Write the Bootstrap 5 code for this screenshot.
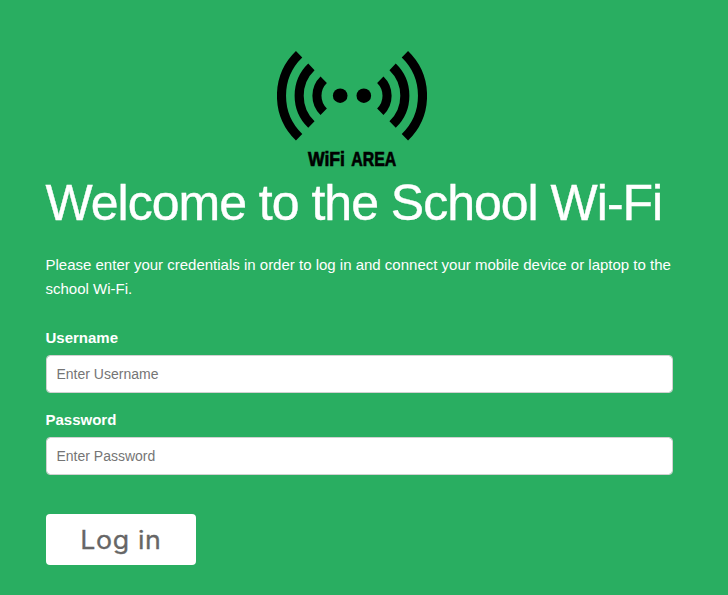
<!DOCTYPE html>
<html lang="en">
<head>
<meta charset="utf-8">
<meta name="viewport" content="width=device-width, initial-scale=1">
<title>School Wi-Fi</title>
<link href="https://cdn.jsdelivr.net/npm/bootstrap@5.3.0/dist/css/bootstrap.min.css" rel="stylesheet">
<style>
body { background: #29ae61; color: #fff; font: 15px/24px "Liberation Sans", Arial, sans-serif; }
.login-page { padding: 50px 55px 0 46px; }
.wifi-logo { width: 150px; height: 120px; margin-right: 15px; }
.wifi-logo text { font: bold 21px "Liberation Sans", sans-serif; stroke: #000; stroke-width: .7px; }
.page-title { font-size: 50px; line-height: 60px; letter-spacing: -1px; margin: 3px 0 20px -.5px; font-weight: 400; white-space: nowrap; -webkit-text-stroke: .4px #fff; }
.intro { margin: 0 0 25px -.5px; }
.form-label { margin: 0 0 5px -.5px; line-height: 24px; }
.form-control { height: 38px; padding: 6px 9.5px; font-size: 14px; line-height: 24px; border: 1px solid #d1d1d1; border-radius: 4px; }
.form-control::placeholder { color: #757575; }
.field-group { margin-bottom: 15px; }
.btn-login { width: 150px; height: 51px; padding: 0; margin-top: 24px; background: #fff; color: #666; border: 0; border-radius: 4px; font: 400 25px/50px Inter, sans-serif; letter-spacing: .6px; -webkit-text-stroke: .3px #666; }
.btn-login span { transform: scaleX(1.07); }
</style>
</head>
<body>
<main class="login-page">
  <div class="d-flex justify-content-center">
    <svg class="wifi-logo" viewBox="0 0 150 120" role="img" aria-label="WiFi area">
      <g fill="none" stroke="#000" stroke-width="9.1">
        <path d="M22.1 4.2A57.7 57.7 0 0 0 22.1 87.2M34.4 16.9A40 40 0 0 0 34.4 74.5M46.7 29.7A22.3 22.3 0 0 0 46.7 61.7"/>
        <path d="M127.9 4.2A57.7 57.7 0 0 1 127.9 87.2M115.6 16.9A40 40 0 0 1 115.6 74.5M103.3 29.7A22.3 22.3 0 0 1 103.3 61.7"/>
      </g>
      <circle cx="63.2" cy="45.7" r="7.3"/>
      <circle cx="86.8" cy="45.7" r="7.3"/>
      <text x="31" y="115.6" textLength="37" lengthAdjust="spacingAndGlyphs">WiFi</text>
      <text x="74.3" y="115.6" textLength="45" lengthAdjust="spacingAndGlyphs">AREA</text>
    </svg>
  </div>
  <h1 class="page-title">Welcome to the School Wi-Fi</h1>
  <p class="intro">Please enter your credentials in order to log in and connect your mobile device or laptop to the school Wi-Fi.</p>
  <form>
    <div class="field-group">
      <label class="form-label d-block fw-bold" for="username">Username</label>
      <input class="form-control" type="text" id="username" placeholder="Enter Username">
    </div>
    <div class="field-group">
      <label class="form-label d-block fw-bold" for="password">Password</label>
      <input class="form-control" type="password" id="password" placeholder="Enter Password">
    </div>
    <button class="btn btn-login" type="button"><span class="d-inline-block">Log in</span></button>
  </form>
</main>
<script src="https://cdn.jsdelivr.net/npm/bootstrap@5.3.0/dist/js/bootstrap.bundle.min.js"></script>
</body>
</html>
